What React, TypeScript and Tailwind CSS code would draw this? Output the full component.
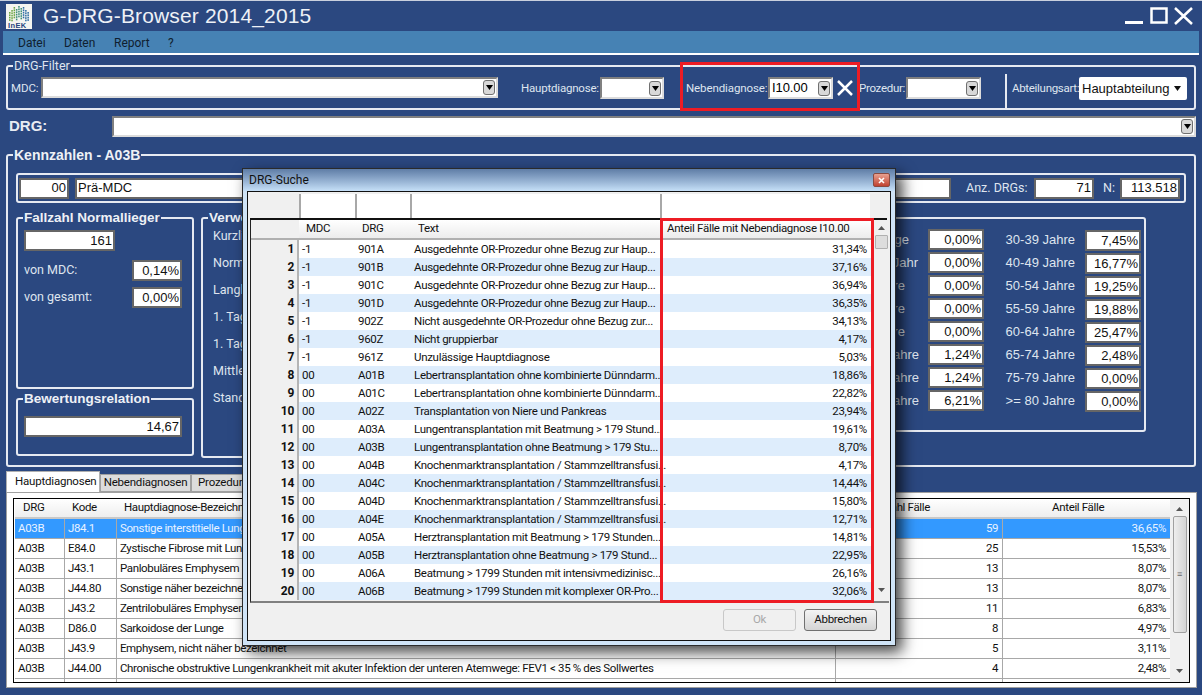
import React from "react";
import clsx from "clsx";

const mainRows = [
  ["A03B", "J84.1", "Sonstige interstitielle Lungenkrankheiten mit Fibrose", "59", "36,65%"],
  ["A03B", "E84.0", "Zystische Fibrose mit Lungenmanifestationen", "25", "15,53%"],
  ["A03B", "J43.1", "Panlobuläres Emphysem", "13", "8,07%"],
  ["A03B", "J44.80", "Sonstige näher bezeichnete chronische obstruktive Lungenkrankheit", "13", "8,07%"],
  ["A03B", "J43.2", "Zentrilobuläres Emphysem", "11", "6,83%"],
  ["A03B", "D86.0", "Sarkoidose der Lunge", "8", "4,97%"],
  ["A03B", "J43.9", "Emphysem, nicht näher bezeichnet", "5", "3,11%"],
  ["A03B", "J44.00", "Chronische obstruktive Lungenkrankheit mit akuter Infektion der unteren Atemwege: FEV1 < 35 % des Sollwertes", "4", "2,48%"],
  ["", "", "", "", ""],
];

const searchRows = [
  ["-1", "901A", "Ausgedehnte OR-Prozedur ohne Bezug zur Haup...", "31,34%"],
  ["-1", "901B", "Ausgedehnte OR-Prozedur ohne Bezug zur Haup...", "37,16%"],
  ["-1", "901C", "Ausgedehnte OR-Prozedur ohne Bezug zur Haup...", "36,94%"],
  ["-1", "901D", "Ausgedehnte OR-Prozedur ohne Bezug zur Haup...", "36,35%"],
  ["-1", "902Z", "Nicht ausgedehnte OR-Prozedur ohne Bezug zur...", "34,13%"],
  ["-1", "960Z", "Nicht gruppierbar", "4,17%"],
  ["-1", "961Z", "Unzulässige Hauptdiagnose", "5,03%"],
  ["00", "A01B", "Lebertransplantation ohne kombinierte Dünndarm...", "18,86%"],
  ["00", "A01C", "Lebertransplantation ohne kombinierte Dünndarm...", "22,82%"],
  ["00", "A02Z", "Transplantation von Niere und Pankreas", "23,94%"],
  ["00", "A03A", "Lungentransplantation mit Beatmung > 179 Stund...", "19,61%"],
  ["00", "A03B", "Lungentransplantation ohne Beatmung > 179 Stu...", "8,70%"],
  ["00", "A04B", "Knochenmarktransplantation / Stammzelltransfusi...", "4,17%"],
  ["00", "A04C", "Knochenmarktransplantation / Stammzelltransfusi...", "14,44%"],
  ["00", "A04D", "Knochenmarktransplantation / Stammzelltransfusi...", "15,80%"],
  ["00", "A04E", "Knochenmarktransplantation / Stammzelltransfusi...", "12,71%"],
  ["00", "A05A", "Herztransplantation mit Beatmung > 179 Stunden...", "14,81%"],
  ["00", "A05B", "Herztransplantation ohne Beatmung > 179 Stund...", "22,95%"],
  ["00", "A06A", "Beatmung > 1799 Stunden mit intensivmedizinisc...", "26,16%"],
  ["00", "A06B", "Beatmung > 1799 Stunden mit komplexer OR-Pro...", "32,06%"],
];

const ageRows = [
  ["unter 28 Tage", "0,00%", "30-39 Jahre", "7,45%", "pr-[19px]"],
  ["28 Tage - 1 Jahr", "0,00%", "40-49 Jahre", "16,77%", "pr-[10px]"],
  ["1-5 Jahre", "0,00%", "50-54 Jahre", "19,25%", "pr-[23px]"],
  ["6-9 Jahre", "0,00%", "55-59 Jahre", "19,88%", "pr-[23px]"],
  ["10-15 Jahre", "0,00%", "60-64 Jahre", "25,47%", "pr-[23px]"],
  ["16-17 Jahre", "1,24%", "65-74 Jahre", "2,48%", "pr-[9px]"],
  ["18-23 Jahre", "1,24%", "75-79 Jahre", "0,00%", "pr-[9px]"],
  ["24-29 Jahre", "6,21%", ">= 80 Jahre", "0,00%", "pr-[9px]"],
];

const stayLabels = [
  "Kurzlieger",
  "Normallieger",
  "Langlieger",
  "1. Tag mit Abschlag",
  "1. Tag zus. Entgelt",
  "Mittlere Verweildauer",
  "Standardabweichung",
];

function DownArrow({ className }: { className?: string }) {
  return (
    <svg width="7" height="5" viewBox="0 0 7 5" className={className}>
      <path d="M0 0h7L3.5 5z" fill="currentColor" />
    </svg>
  );
}

function ComboBox({ className, value }: { className: string; value?: string }) {
  return (
    <div
      className={clsx(
        "flex items-center justify-between border-2 border-t-[#808080] border-l-[#808080] border-r-[#dcdcdc] border-b-[#dcdcdc] bg-white pl-[2px] pr-[1px] text-[13px] text-black",
        className,
      )}
    >
      <span>{value}</span>
      <div className="flex h-[15px] w-[12px] items-center justify-center rounded-[3px] border border-[#707070] bg-[#d8d8d8] text-black">
        <DownArrow />
      </div>
    </div>
  );
}

function Field({ className, value, left }: { className: string; value: string; left?: boolean }) {
  return (
    <div
      className={clsx(
        "flex items-center border-2 border-[#666666] bg-white px-[1px] text-[13px] text-[#111111]",
        left ? "justify-start" : "justify-end",
        className,
      )}
    >
      {value}
    </div>
  );
}

function GroupBox({
  title,
  className,
  children,
  bold = true,
}: {
  title: string;
  className: string;
  children?: React.ReactNode;
  bold?: boolean;
}) {
  return (
    <fieldset className={clsx("rounded-[3px] border-2 border-[#e6eaf2]", className)}>
      <legend
        className={clsx(
          "ml-[5px] px-[1px]",
          bold ? "text-[13.5px] leading-[16px] font-bold text-[#eef1f6]" : "font-['Roboto',sans-serif] text-[12.5px] leading-[16px] text-[#dfe5ef]",
        )}
      >
        {title}
      </legend>
      {children}
    </fieldset>
  );
}

function Logo() {
  const cols = [0, 1, 2, 3, 4, 5, 6, 7, 8];
  const tops = [8, 6, 3, 5, 2, 4, 3, 6, 8];
  return (
    <svg width="26" height="25" viewBox="0 0 26 25" className="bg-[#f4f4f0]">
      {cols.map((c) =>
        [0, 1, 2, 3, 4].map((r) =>
          tops[c] + r * 2.4 < 17 ? (
            <rect
              key={`${c}-${r}`}
              x={3 + c * 2.3}
              y={tops[c] + r * 2.4}
              width="1.5"
              height="1.7"
              fill={c < 3 ? "#6da544" : c < 6 ? "#3f8f7a" : "#2f6ea5"}
            />
          ) : null,
        ),
      )}
      <text x="2" y="23.5" fontSize="7.5" fontWeight="700" fill="#24457e" fontFamily="Liberation Sans" letterSpacing="0.4">
        InEK
      </text>
    </svg>
  );
}

function TitleBar() {
  return (
    <div className="flex h-[30px] items-center pl-[6px]">
      <Logo />
      <span className="ml-[11px] text-[21px] tracking-[0.15px] text-[#eef1f6]">G-DRG-Browser 2014_2015</span>
      <div className="ml-auto flex items-center gap-[6px] pr-[9px]">
        <svg width="19" height="18" viewBox="0 0 19 18">
          <rect x="0" y="14" width="18" height="3" fill="#fff" />
        </svg>
        <svg width="18" height="18" viewBox="0 0 18 18">
          <rect x="1.5" y="1.5" width="15" height="14" fill="none" stroke="#fff" strokeWidth="2.5" />
        </svg>
        <svg width="19" height="18" viewBox="0 0 19 18">
          <path d="M1 1l17 16M18 1L1 17" stroke="#fff" strokeWidth="2.5" />
        </svg>
      </div>
    </div>
  );
}

function MenuBar() {
  return (
    <div className="mx-[3px] flex h-[24px] items-center border-b-2 border-white bg-[#4682b4] pt-[2px] pl-[15px] font-['Roboto',sans-serif] text-[12px] text-[#10202f]">
      <span className="w-[46px]">Datei</span>
      <span className="w-[50px]">Daten</span>
      <span className="w-[54px]">Report</span>
      <span>?</span>
    </div>
  );
}

function FilterBox() {
  return (
    <GroupBox title="DRG-Filter" bold={false} className="mt-[3px] ml-[6px] h-[52px] w-[1190px]">
      <div className="flex h-[32px] items-start pt-[3px] font-['Roboto',sans-serif] text-[11.5px] tracking-[-0.1px] text-[#dfe5ef]">
        <span className="ml-[3px] w-[30px] pt-[3px]">MDC:</span>
        <ComboBox className="h-[21px] w-[457px]" />
        <span className="ml-[23px] w-[79px] pt-[3px] tracking-[-0.2px]">Hauptdiagnose:</span>
        <ComboBox className="h-[22px] w-[64px]" />
        <span className="ml-[22px] w-[82px] pt-[3px]">Nebendiagnose:</span>
        <ComboBox className="h-[22px] w-[65px] font-['Liberation_Sans',sans-serif]" value="I10.00" />
        <svg width="18" height="18" viewBox="0 0 18 18" className="mt-[2px] ml-[3px] shrink-0">
          <path d="M2 2l14 14M16 2L2 16" stroke="#fff" strokeWidth="2.5" />
        </svg>
        <span className="ml-[5px] w-[47px] pt-[3px] tracking-[-0.3px]">Prozedur:</span>
        <ComboBox className="h-[22px] w-[75px]" />
        <div className="-mt-[3px] ml-[24px] h-[35px] w-[2px] bg-[#e6eaf2]" />
        <span className="ml-[5px] w-[67px] pt-[3px] tracking-[-0.3px] whitespace-nowrap">Abteilungsart:</span>
        <div className="flex h-[23px] w-[108px] items-center justify-between rounded-[2px] bg-white pr-[6px] pl-[3px] font-['Liberation_Sans',sans-serif] text-[13px] tracking-normal text-[#111111]">
          <span>Hauptabteilung</span>
          <DownArrow />
        </div>
      </div>
    </GroupBox>
  );
}

function KennzahlenBox() {
  return (
    <fieldset className="mt-[10px] ml-[6px] h-[320px] w-[1190px] rounded-[3px] border-2 border-[#e6eaf2]">
      <legend className="ml-[5px] px-[1px] text-[14px] leading-[16px] font-bold text-[#eef1f6]">Kennzahlen - A03B</legend>
      <div className="mt-[10px] ml-[8px] flex h-[30px] w-[1170px] items-center rounded-[3px] border-2 border-[#e6eaf2] pl-[1px] text-[13px] text-[#dfe5ef]">
        <Field className="h-[21px] w-[50px]" value="00" />
        <Field className="ml-[6px] h-[21px] w-[876px]" value="Prä-MDC" left />
        <span className="ml-[15px] w-[68px] font-['Roboto',sans-serif] text-[12.5px] whitespace-nowrap">Anz. DRGs:</span>
        <Field className="h-[21px] w-[60px]" value="71" />
        <span className="ml-[9px] w-[17px] font-['Roboto',sans-serif] text-[12.5px]">N:</span>
        <Field className="h-[21px] w-[60px]" value="113.518" />
      </div>
      <div className="mt-[7px] ml-[8px] flex">
        <div className="flex w-[178px] flex-col gap-[2px]">
          <GroupBox title="Fallzahl Normallieger" className="h-[179px] w-[178px]">
            <div className="flex flex-col pl-[6px] text-[12.5px] text-[#dfe5ef]">
              <Field className="mt-[4px] h-[21px] w-[91px]" value="161" />
              <div className="mt-[9px] flex h-[21px] items-center font-['Roboto',sans-serif]">
                <span className="w-[108px]">von MDC:</span>
                <Field className="h-[21px] w-[50px] font-['Liberation_Sans',sans-serif]" value="0,14%" />
              </div>
              <div className="mt-[6px] flex h-[21px] items-center font-['Roboto',sans-serif]">
                <span className="w-[108px]">von gesamt:</span>
                <Field className="h-[21px] w-[50px] font-['Liberation_Sans',sans-serif]" value="0,00%" />
              </div>
            </div>
          </GroupBox>
          <GroupBox title="Bewertungsrelation" className="h-[65px] w-[178px]">
            <div className="pt-[9px] pl-[6px]">
              <Field className="h-[21px] w-[158px]" value="14,67" />
            </div>
          </GroupBox>
        </div>
        <GroupBox title="Verweildauer" className="ml-[7px] h-[248px] w-[400px]">
          <div className="flex flex-col gap-[11px] pt-[2px] pl-[10px] font-['Roboto',sans-serif] text-[12.5px] leading-[16px] text-[#dfe5ef]">
            {stayLabels.map((l) => (
              <span key={l}>{l}</span>
            ))}
          </div>
        </GroupBox>
        <GroupBox title="Altersverteilung (%)" className="ml-[10px] h-[222px] w-[535px]">
          <div className="flex flex-col gap-[2px] pt-[3px] text-[13px] text-[#dfe5ef]">
            {ageRows.map((r) => (
              <div key={r[2]} className="flex h-[21px] items-center justify-end pr-[3px]">
                <span className={clsx("text-right whitespace-nowrap", r[4])}>{r[0]}</span>
                <Field className="h-[21px] w-[56px]" value={r[1]} />
                <span className="w-[101px] pr-[10px] text-right">{r[2]}</span>
                <Field className="mt-[2px] h-[21px] w-[56px]" value={r[3]} />
              </div>
            ))}
          </div>
        </GroupBox>
      </div>
    </fieldset>
  );
}

function ScrollArrow({ up, className }: { up?: boolean; className?: string }) {
  return (
    <svg width="7" height="4" viewBox="0 0 7 4" className={className}>
      <path d={up ? "M0 4h7L3.5 0z" : "M0 0h7L3.5 4z"} fill="#555" />
    </svg>
  );
}

function MainTable() {
  return (
    <div className="mt-[4px] ml-[6px] flex h-[185px] w-[1177px] overflow-hidden border border-black font-['Roboto',sans-serif] text-[11.5px] tracking-[-0.35px] text-[#111111]">
      <div className="w-[1156px] pl-[1px]">
        <div className="flex h-[20px] items-center border-b-2 border-[#c8c8c8] bg-gradient-to-b from-white to-[#eeeeee]">
          <span className="w-[50px] pl-[8px]">DRG</span>
          <span className="w-[52px] pl-[7px]">Kode</span>
          <span className="w-[720px] pl-[7px]">Hauptdiagnose-Bezeichnung</span>
          <span className="w-[167px] pl-[36px]">Anzahl Fälle</span>
          <span className="w-[167px] pl-[49px]">Anteil Fälle</span>
        </div>
        {mainRows.map((r, i) => (
          <div
            key={i}
            className={clsx(
              "flex h-[20px] items-center border-b border-[#a8a8a8]",
              i === 0 && "bg-[#3399ff] text-[#e8f2ff]",
            )}
          >
            <span className="h-full w-[50px] border-r border-[#a8a8a8] pl-[3px] leading-[19px]">{r[0]}</span>
            <span className="h-full w-[52px] border-r border-[#a8a8a8] pl-[3px] leading-[19px]">{r[1]}</span>
            <span className="h-full w-[720px] border-r border-[#a8a8a8] pl-[3px] leading-[19px] whitespace-nowrap">{r[2]}</span>
            <span className="h-full w-[167px] border-r border-[#a8a8a8] pr-[4px] text-right leading-[19px]">{r[3]}</span>
            <span className="h-full w-[167px] pr-[4px] text-right leading-[19px]">{r[4]}</span>
          </div>
        ))}
      </div>
      <div className="flex w-[19px] flex-col items-center bg-[#f0f0f0] pt-[8px]">
        <ScrollArrow up />
        <div className="mt-[5px] flex h-[117px] w-[14px] items-center justify-center rounded-[2px] border border-[#a0a0a0] bg-gradient-to-r from-[#eeeeee] to-[#d4d4d4] text-[9px] leading-none text-[#666]">
          ≡
        </div>
        <ScrollArrow className="mt-[36px]" />
      </div>
    </div>
  );
}

function TabArea() {
  return (
    <div className="mt-[5px] ml-[6px] w-[1191px]">
      <div className="flex h-[20px] items-end font-['Roboto',sans-serif] text-[11.5px] tracking-[-0.2px] text-[#111111]">
        <div className="z-10 flex h-[21px] w-[94px] items-center border border-b-0 border-[#b0b0b0] bg-white pl-[8px]">Hauptdiagnosen</div>
        <div className="flex h-[18px] w-[91px] items-center justify-center border border-[#a0a0a0] bg-[#dcdcdc]">Nebendiagnosen</div>
        <div className="flex h-[18px] w-[91px] items-center border border-[#a0a0a0] bg-[#dcdcdc] pl-[6px]">Prozeduren</div>
      </div>
      <div className="h-[196px] border border-[#a0a0a0] bg-white pt-px">
        <MainTable />
      </div>
    </div>
  );
}

function SearchDialog() {
  return (
    <div className="absolute top-[167px] left-[242px] flex h-[478px] w-[654px] flex-col border border-[#2a2a2a] bg-[#cfe3f6] font-['Roboto',sans-serif] shadow-[6px_6px_14px_rgba(0,0,0,0.75)]">
      <div className="flex h-[22px] shrink-0 items-center justify-between bg-gradient-to-b from-[#5f7da6] to-[#c6e0f8] pr-[5px] pl-[6px] text-[12px] text-[#111111]">
        <span>DRG-Suche</span>
        <div className="flex h-[14px] w-[17px] items-center justify-center rounded-[2px] border border-[#8a4a40] bg-gradient-to-b from-[#e8a090] to-[#c04030]">
          <svg width="7" height="7" viewBox="0 0 7 7">
            <path d="M1 1l5 5M6 1L1 6" stroke="#fff" strokeWidth="1.6" />
          </svg>
        </div>
      </div>
      <div className="mx-[4px] flex h-[450px] flex-col border border-[#111111] bg-[#f0f0f0] pt-[2px] pl-[2px] text-[11.5px] tracking-[-0.3px] text-[#111111]">
        <div className="flex h-[26px] w-[637px] shrink-0 border-b-2 border-[#111111]">
          <div className="w-[49px] bg-[#f0f0f0]" />
          <div className="w-[56px] border-l-2 border-[#a8a8a8] bg-white" />
          <div className="w-[55px] border-l-2 border-[#a8a8a8] bg-white" />
          <div className="w-[250px] border-l-2 border-[#a8a8a8] bg-white" />
          <div className="w-[210px] border-l-2 border-[#a8a8a8] bg-white" />
        </div>
        <div className="flex h-[383px] w-[639px] shrink-0 overflow-hidden border-b-2 border-l border-[#808080] border-l-[#222222]">
          <div className="w-[622px]">
            <div className="flex h-[20px] items-center border-b-2 border-[#b0b0b0]">
              <div className="h-full w-[48px] bg-[#f0f0f0]" />
              <div className="flex h-full flex-1 items-center bg-gradient-to-b from-white to-[#ececec]">
                <span className="w-[56px] pl-[7px]">MDC</span>
                <span className="w-[55px] pl-[7px]">DRG</span>
                <span className="w-[251px] pl-[8px]">Text</span>
                <span className="pl-[6px]">Anteil Fälle mit Nebendiagnose I10.00</span>
              </div>
            </div>
            {searchRows.map((r, i) => (
              <div key={r[1]} className={clsx("flex h-[18px] items-center leading-[18px]", i % 2 === 1 ? "bg-[#deedfc]" : "bg-white")}>
                <span className="h-full w-[48px] border-r-2 border-[#b4b4b4] bg-[#f0f0f0] pr-[3px] text-right text-[12px] font-bold">{i + 1}</span>
                <span className="w-[56px] pl-[3px]">{r[0]}</span>
                <span className="w-[56px] pl-[3px]">{r[1]}</span>
                <span className="w-[251px] pl-[3px] whitespace-nowrap">{r[2]}</span>
                <span className="w-[211px] pr-[6px] text-right">{r[3]}</span>
              </div>
            ))}
          </div>
          <div className="flex w-[16px] flex-col items-center bg-[#f0f0f0] pt-[6px]">
            <ScrollArrow up />
            <div className="mt-[5px] h-[14px] w-[13px] rounded-[1px] border border-[#b0b0b0] bg-[#dddddd]" />
            <ScrollArrow className="mt-[339px]" />
          </div>
        </div>
        <div className="flex flex-1 items-start justify-end gap-[8px] pt-[6px] pr-[13px]">
          <div className="flex h-[22px] w-[73px] items-center justify-center rounded-[3px] border border-[#c8c8c8] bg-[#f0f0f0] text-[#a8a8a8]">Ok</div>
          <div className="flex h-[22px] w-[73px] items-center justify-center rounded-[3px] border border-[#707070] bg-gradient-to-b from-[#f4f4f4] to-[#d4d4d4]">Abbrechen</div>
        </div>
      </div>
    </div>
  );
}

export default function App() {
  return (
    <div className="relative h-[695px] w-[1202px] overflow-hidden border-t border-[#c9d0de] bg-[#2b4880] font-['Liberation_Sans',Arial,sans-serif]">
      <TitleBar />
      <MenuBar />
      <FilterBox />
      <div className="mt-[6px] flex h-[21px] items-center pl-[9px]">
        <span className="w-[103px] text-[15px] font-bold text-[#e8ecf3]">DRG:</span>
        <ComboBox className="h-[21px] w-[1084px]" />
      </div>
      <KennzahlenBox />
      <TabArea />
      <SearchDialog />
      {/* red annotation boxes on top of the screenshot */}
      <div className="absolute top-[61px] left-[680px] h-[49px] w-[180px] border-[3px] border-[#ed1c24]" />
      <div className="absolute top-[217px] left-[660px] h-[385px] w-[214px] border-[3px] border-[#ed1c24]" />
    </div>
  );
}
